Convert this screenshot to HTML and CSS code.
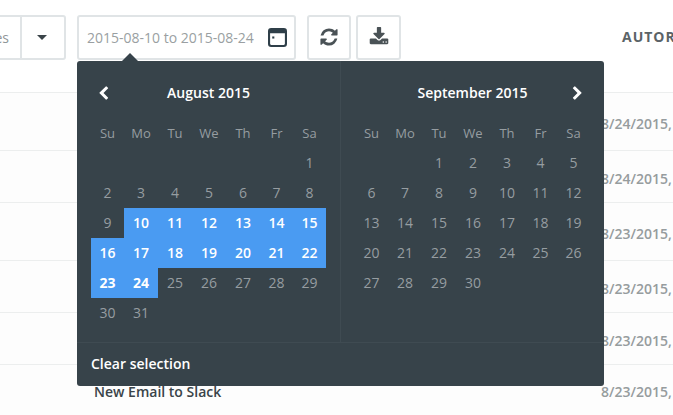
FILE: index.html
```html
<!DOCTYPE html>
<html lang="en">
<head>
  <meta charset="UTF-8">
  <title>Task history</title>
  <link rel="stylesheet" href="styles.css">
</head>
<body>

  <div class="toolbar">
    <div class="select-box">
      <span class="select-label">es</span>
      <span class="select-caret"></span>
    </div>
    <div class="date-input">
      <span class="date-text">2015-08-10 to 2015-08-24</span>
      <svg class="cal-icon" viewBox="0 0 18 18">
        <path fill-rule="evenodd" d="M3 0h12a3 3 0 0 1 3 3v12a3 3 0 0 1-3 3H3a3 3 0 0 1-3-3V3a3 3 0 0 1 3-3zM2 5v10a1 1 0 0 0 1 1h12a1 1 0 0 0 1-1V5z"/>
        <rect x="4" y="8" width="2" height="2"/>
      </svg>
    </div>
    <button class="icon-btn">
      <svg class="icon" viewBox="0 0 1792 1792"><path d="M1639 1056q0 5-1 7-64 268-268 434.500t-478 166.500q-146 0-282.500-55t-243.500-157l-129 129q-19 19-45 19t-45-19-19-45v-448q0-26 19-45t45-19h448q26 0 45 19t19 45-19 45l-137 137q71 66 161 102t187 36q134 0 250-65t186-179q11-17 53-117 8-23 30-23h192q13 0 22.500 9.500t9.500 22.500zm25-800v448q0 26-19 45t-45 19h-448q-26 0-45-19t-19-45 19-45l138-138q-148-137-349-137-134 0-250 65t-186 179q-11 17-53 117-8 23-30 23h-199q-13 0-22.500-9.500t-9.500-22.500v-7q65-268 270-434.500t480-166.500q146 0 284 55.500t245 156.500l130-129q19-19 45-19t45 19 19 45z"/></svg>
    </button>
    <button class="icon-btn">
      <svg class="icon" viewBox="0 0 1792 1792"><path d="M1344 1344q0-26-19-45t-45-19-45 19-19 45 19 45 45 19 45-19 19-45zm256 0q0-26-19-45t-45-19-45 19-19 45 19 45 45 19 45-19 19-45zm128-224v320q0 40-28 68t-68 28h-1472q-40 0-68-28t-28-68v-320q0-40 28-68t68-28h465l135 136q58 56 136 56t136-56l136-136h464q40 0 68 28t28 68zm-325-569q17 41-14 70l-448 448q-18 19-45 19t-45-19l-448-448q-31-29-14-70 17-39 59-39h256v-448q0-26 19-45t45-19h256q26 0 45 19t19 45v448h256q42 0 59 39z"/></svg>
    </button>
    <span class="automated">AUTOR</span>
  </div>

  <div class="rows">
    <div class="row tall"><span class="row-date">8/24/2015,</span></div>
    <div class="row"><span class="row-date">8/24/2015,</span></div>
    <div class="row tall"><span class="row-date">8/23/2015,</span></div>
    <div class="row"><span class="row-date">8/23/2015,</span></div>
    <div class="row"><span class="row-date">8/23/2015,</span></div>
    <div class="row last"><span class="row-name">New Email to Slack</span><span class="row-date">8/23/2015,</span></div>
  </div>

  <div class="picker">
    <div class="picker-arrow"></div>
    <div class="months">
      <div class="month">
        <div class="month-title">
          <svg class="nav nav-prev" viewBox="0 0 1792 1792"><path d="M1427 301l-531 531 531 531q19 19 19 45t-19 45l-166 166q-19 19-45 19t-45-19l-742-742q-19-19-19-45t19-45l742-742q19-19 45-19t45 19l166 166q19 19 19 45t-19 45z"/></svg>
          August 2015
        </div>
        <div class="days">
          <span class="dow">Su</span><span class="dow">Mo</span><span class="dow">Tu</span><span class="dow">We</span><span class="dow">Th</span><span class="dow">Fr</span><span class="dow">Sa</span>
          <span></span><span></span><span></span><span></span><span></span><span></span><span>1</span>
          <span>2</span><span>3</span><span>4</span><span>5</span><span>6</span><span>7</span><span>8</span>
          <span>9</span><span class="sel">10</span><span class="sel">11</span><span class="sel">12</span><span class="sel">13</span><span class="sel">14</span><span class="sel">15</span>
          <span class="sel">16</span><span class="sel">17</span><span class="sel">18</span><span class="sel">19</span><span class="sel">20</span><span class="sel">21</span><span class="sel">22</span>
          <span class="sel end">23</span><span class="sel end">24</span><span>25</span><span>26</span><span>27</span><span>28</span><span>29</span>
          <span>30</span><span>31</span>
        </div>
      </div>
      <div class="month">
        <div class="month-title">
          September 2015
          <svg class="nav nav-next" viewBox="0 0 1792 1792"><path d="M1363 877l-742 742q-19 19-45 19t-45-19l-166-166q-19-19-19-45t19-45l531-531-531-531q-19-19-19-45t19-45l166-166q19-19 45-19t45 19l742 742q19 19 19 45t-19 45z"/></svg>
        </div>
        <div class="days">
          <span class="dow">Su</span><span class="dow">Mo</span><span class="dow">Tu</span><span class="dow">We</span><span class="dow">Th</span><span class="dow">Fr</span><span class="dow">Sa</span>
          <span></span><span></span><span>1</span><span>2</span><span>3</span><span>4</span><span>5</span>
          <span>6</span><span>7</span><span>8</span><span>9</span><span>10</span><span>11</span><span>12</span>
          <span>13</span><span>14</span><span>15</span><span>16</span><span>17</span><span>18</span><span>19</span>
          <span>20</span><span>21</span><span>22</span><span>23</span><span>24</span><span>25</span><span>26</span>
          <span>27</span><span>28</span><span>29</span><span>30</span>
        </div>
      </div>
    </div>
    <div class="picker-footer">Clear selection</div>
  </div>

</body>
</html>
```

FILE: styles.css
```css
html, body {
  height: 100%;
}

body {
  margin: 0;
  overflow: hidden;
  position: relative;
  background: #fff;
  font-family: "Open Sans", sans-serif;
  font-size: 14px;
  color: #3a4449;
}

.toolbar {
  display: flex;
  align-items: flex-start;
  height: 77px;
  padding-top: 15px;
  box-sizing: border-box;
  white-space: nowrap;
}

.select-box,
.date-input,
.icon-btn {
  flex: none;
  height: 45px;
  box-sizing: border-box;
  border: 2px solid #e0e4e6;
  border-radius: 3px;
  background: #fff;
}

.select-box {
  display: flex;
  align-items: center;
  justify-content: flex-end;
  width: 76px;
  margin-left: -10px;
  color: #8f9699;
}

.select-caret {
  position: relative;
  width: 44px;
  height: 100%;
  margin-left: 11px;
  flex: none;
  border-left: 2px solid #e0e4e6;
  box-sizing: border-box;
}

.select-caret::after {
  content: "";
  position: absolute;
  left: 15px;
  top: 18px;
  border-style: solid;
  border-width: 5px 5px 0;
  border-color: #3a4449 transparent transparent;
}

.date-input {
  display: flex;
  align-items: center;
  justify-content: space-between;
  width: 219px;
  margin-left: 11px;
  padding: 0 7px 0 8px;
  color: #9a9fa2;
}

.cal-icon {
  width: 19px;
  height: 19px;
  fill: #2f3f49;
}

.icon-btn {
  display: flex;
  align-items: center;
  justify-content: center;
  padding: 0 0 2px;
  width: 44px;
  margin-left: 11px;
}

.icon-btn + .icon-btn {
  width: 45px;
  margin-left: 5px;
}

.icon {
  width: 20px;
  height: 20px;
  fill: #4a5256;
}

.automated {
  margin-left: 221px;
  margin-top: 12px;
  font-size: 14px;
  font-weight: 700;
  letter-spacing: 1px;
  color: #5b6367;
}

.rows {
  border-top: 1px solid #eceeee;
  margin-top: 15px;
}

.row {
  display: flex;
  align-items: center;
  height: 52px;
  padding-top: 3px;
  box-sizing: border-box;
  border-bottom: 1px solid #eceeee;
  background: #fdfdfd;
  position: relative;
}

.row.tall {
  height: 58px;
}

.row.last {
  padding-top: 1px;
  border-bottom: none;
}

.row-name {
  position: absolute;
  left: 94px;
  font-weight: 600;
  color: #3a4449;
}

.row-date {
  margin-left: 601px;
  white-space: nowrap;
  font-weight: 600;
  color: #969c9e;
}

.picker {
  position: absolute;
  left: 77px;
  top: 61px;
  width: 527px;
  background: #37434a;
  border-radius: 3px;
}

.picker-arrow {
  position: absolute;
  left: 45px;
  top: -8px;
  border-style: solid;
  border-width: 0 8px 8px;
  border-color: transparent transparent #37434a;
}

.months {
  display: flex;
}

.month {
  position: relative;
  width: 263px;
  padding: 17px 14px 14px;
  box-sizing: border-box;
}

.month + .month {
  width: 264px;
  border-left: 1px solid #3f4b52;
}

.month-title {
  height: 30px;
  line-height: 30px;
  margin-bottom: 10px;
  text-align: center;
  font-weight: 600;
  color: #fff;
}

.nav {
  position: absolute;
  top: 25px;
  width: 15px;
  height: 15px;
  fill: #fff;
}

.nav-prev {
  left: 19px;
}

.nav-next {
  right: 19px;
}

.days {
  display: grid;
  grid-template-columns: 33px 34px 34px 34px 34px 33px 33px;
  grid-auto-rows: 30px;
  color: #969da1;
  text-align: center;
  line-height: 30px;
}

.dow {
  font-size: 13px;
  color: #969da1;
}

.sel {
  background: #4a9bf2;
  color: #fff;
  font-weight: 600;
}

.sel.end {
  font-weight: 700;
}

.picker-footer {
  height: 43px;
  line-height: 41px;
  padding-left: 14px;
  border-top: 1px solid #3f4b52;
  font-weight: 600;
  color: #fff;
}
```
